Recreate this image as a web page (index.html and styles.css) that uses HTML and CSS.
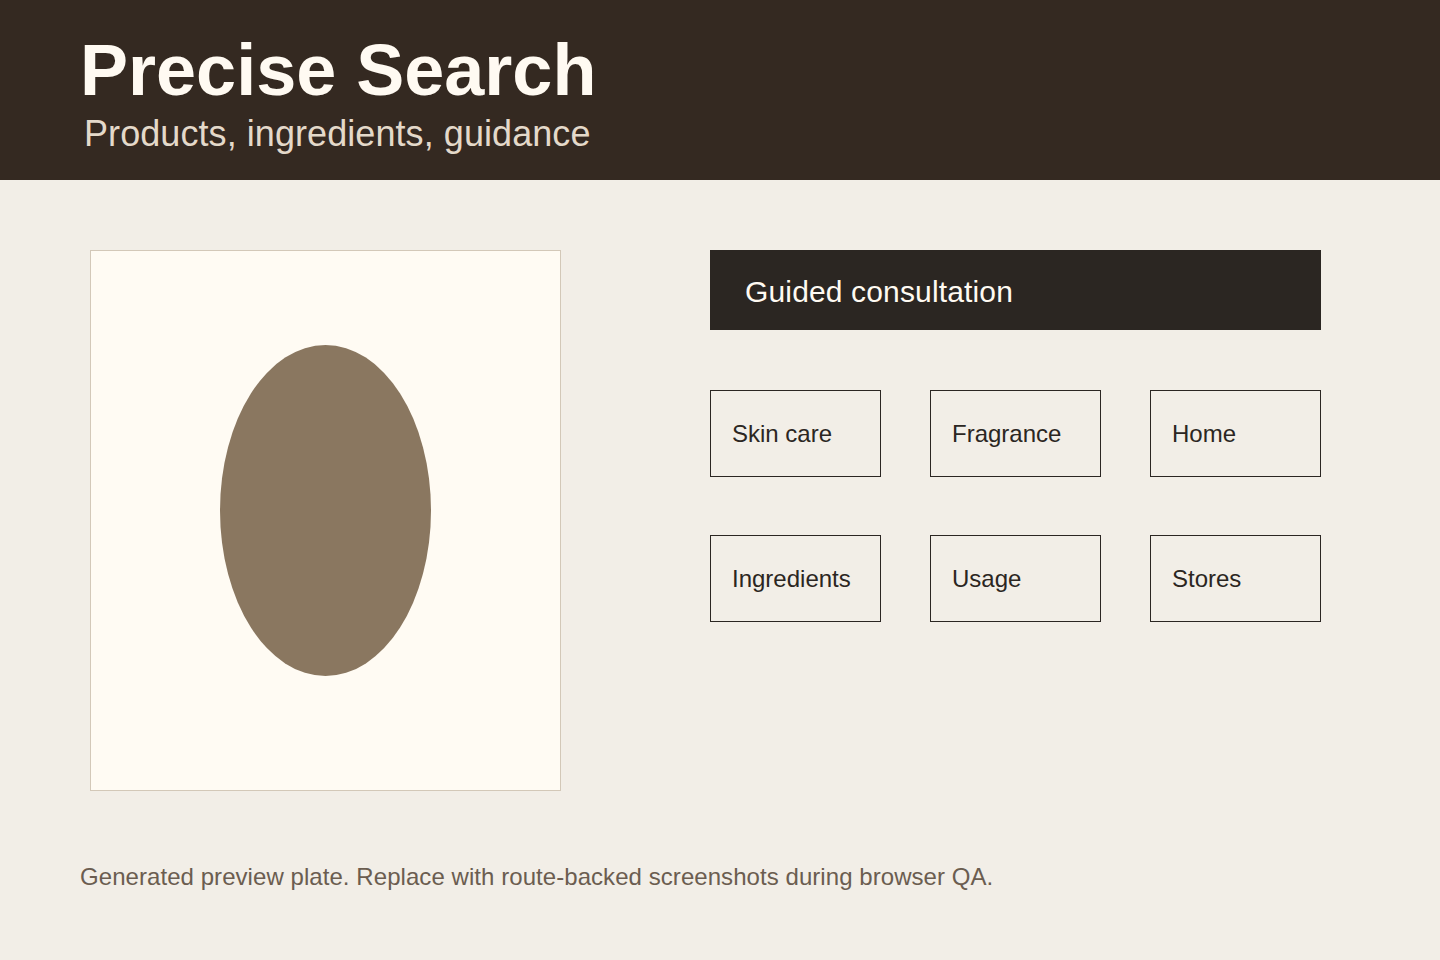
FILE: index.html
```html
<!DOCTYPE html>
<html lang="en">
<head>
<meta charset="utf-8">
<title>Precise Search</title>
<link rel="stylesheet" href="styles.css">
</head>
<body>
<header class="hero">
  <h1 class="hero-title">Precise Search</h1>
  <p class="hero-sub">Products, ingredients, guidance</p>
</header>
<main class="content">
  <div class="plate">
    <div class="oval"></div>
  </div>
  <section class="panel">
    <div class="banner">Guided consultation</div>
    <div class="tiles">
      <div class="tile">Skin care</div>
      <div class="tile">Fragrance</div>
      <div class="tile">Home</div>
      <div class="tile">Ingredients</div>
      <div class="tile">Usage</div>
      <div class="tile">Stores</div>
    </div>
  </section>
</main>
<p class="note">Generated preview plate. Replace with route-backed screenshots during browser QA.</p>
</body>
</html>
```

FILE: styles.css
```css
html, body {
  margin: 0;
  padding: 0;
}
body {
  background: #f2eee7;
  font-family: "Liberation Sans", Arial, sans-serif;
  width: 1440px;
  height: 960px;
  overflow: hidden;
}
.hero {
  background: #342921;
  height: 180px;
  box-sizing: border-box;
  padding: 34px 0 0 80px;
}
.hero-title {
  margin: 0;
  font-size: 72px;
  line-height: 72px;
  font-weight: 700;
  color: #fffaf2;
}
.hero-sub {
  margin: 8px 0 0 4px;
  font-size: 36px;
  line-height: 40px;
  letter-spacing: 0.07px;
  color: #e4d9ca;
}
.content {
  display: flex;
  padding: 70px 0 0 90px;
  gap: 149px;
}
.plate {
  width: 469px;
  height: 539px;
  border: 1px solid #d3c8b8;
  background: #fffbf3;
  display: flex;
  align-items: center;
  justify-content: center;
}
.oval {
  width: 211px;
  height: 331px;
  margin-bottom: 20px;
  border-radius: 50%;
  background: #8a7760;
}
.panel {
  width: 611px;
}
.banner {
  height: 80px;
  background: #2b2622;
  color: #fffaf2;
  font-size: 30px;
  letter-spacing: 0.15px;
  display: flex;
  align-items: center;
  padding: 4px 0 0 35px;
  box-sizing: border-box;
}
.tiles {
  margin-top: 60px;
  display: grid;
  grid-template-columns: repeat(3, 171px);
  column-gap: 49px;
  row-gap: 58px;
}
.tile {
  height: 87px;
  box-sizing: border-box;
  border: 1px solid #2b2622;
  display: flex;
  align-items: center;
  padding: 1px 0 0 21px;
  font-size: 24px;
  color: #2b2622;
}
.note {
  margin: 72px 0 0 80px;
  font-size: 24px;
  letter-spacing: 0.06px;
  color: #6b5d50;
}
```
